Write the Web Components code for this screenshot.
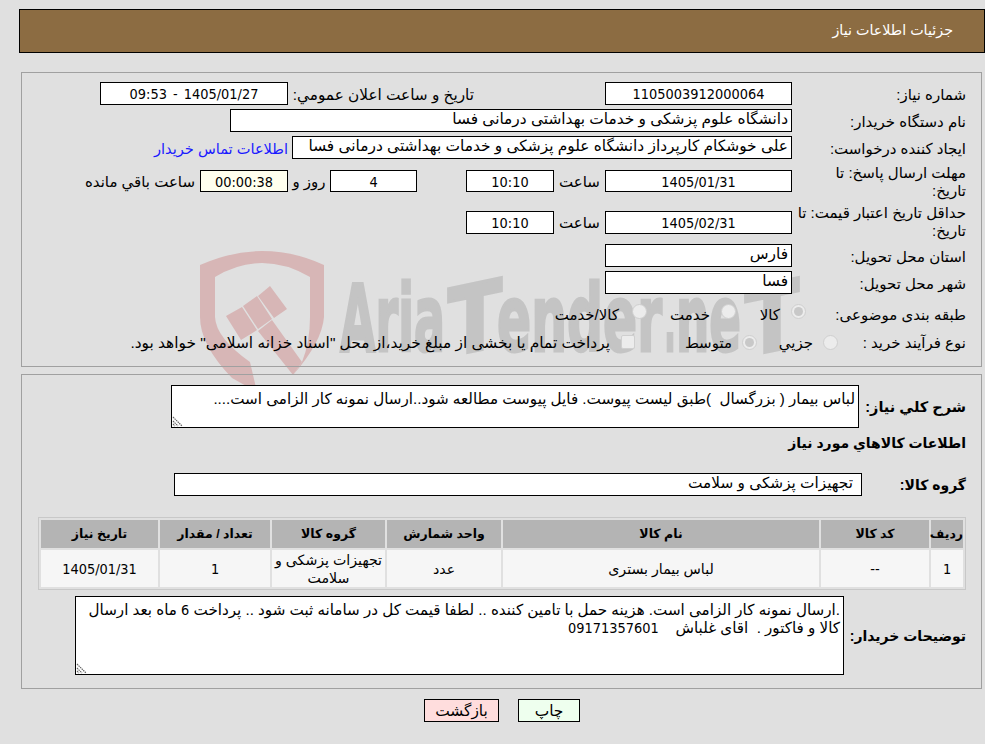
<!DOCTYPE html>
<html lang="fa" dir="rtl"><head><meta charset="utf-8">
<style>
html,body{margin:0;padding:0;background:#e0e0e0}
body{width:985px;height:744px;overflow:hidden;color:#000}
</style></head><body>
<tender-app></tender-app>
<script>
const FONT='font-family:"Liberation Sans","DejaVu Sans",sans-serif;font-size:15px;line-height:18px;';
const NUM='font-family:"DejaVu Sans Condensed","DejaVu Sans",sans-serif;font-size:14.4px;';
const def=(n,css,html)=>customElements.define(n,class extends HTMLElement{connectedCallback(){if(this.shadowRoot)return;this.attachShadow({mode:'open'}).innerHTML='<style>'+css+'</style>'+html;}});
def('tender-title',':host{display:flex;align-items:center;box-sizing:border-box;height:44px;width:966px;background:#8c6c42;border:1px solid #000;color:#fff;padding:0 31px 2px 0;'+FONT+'font-size:14.3px}','<slot></slot>');
def('tender-panel',':host{display:block;box-sizing:border-box;border:1px solid #a0a0a0;width:961px;margin:0 3px 0 0;padding-right:15px}','<slot></slot>');
def('tender-row',':host{display:flex;align-items:center;margin-bottom:4px}','<slot></slot>');
def('tender-field',':host{display:block;flex:none;box-sizing:border-box;background:#fff;border:1px solid #000;height:23px;line-height:24px;white-space:nowrap;overflow:hidden;padding:0 3px;'+FONT+'font-size:15.4px}:host([c]){text-align:center}:host([y]){background:#ffffee}:host([n]){'+NUM+'line-height:23px}','<slot></slot>');
def('tender-label',':host{display:block;flex:none;'+FONT+'}:host([b]){font-weight:bold;font-size:14px;white-space:nowrap}:host(:not([b])){margin-top:2px}:host([c]){text-align:center}','<slot></slot>');
def('tender-area',':host{display:block;flex:none;position:relative;box-sizing:border-box;background:#fff;border:1px solid #000;padding:4px 3px 3px;white-space:pre;overflow:hidden;'+FONT+'font-size:15.15px}svg{position:absolute;left:0;bottom:0}','<slot></slot><svg width="11" height="11" viewBox="0 0 11 11"><path d="M1 1l9 9M1 5l5 5M1 8l2 2" stroke="#666" stroke-width="1.2" stroke-dasharray="1.5 .7" fill="none"/></svg>');
def('tender-radio',':host{display:block;flex:none;width:15px;height:15px;box-sizing:border-box;border:1px solid #cfcfcf;border-radius:50%;background:#ececec;position:relative}:host([on])::after{content:"";position:absolute;inset:2px;border-radius:50%;background:#c8c8c8}','');
def('tender-check',':host{display:block;flex:none;width:14px;height:14px;box-sizing:border-box;border:1px solid #cfcfcf;border-radius:2px;background:#ececec}','');
def('tender-btn',':host{display:flex;align-items:center;justify-content:center;box-sizing:border-box;height:23px;border:1px solid #000;background:var(--b);'+FONT+'font-size:15.4px}','<slot></slot>');
def('tender-watermark',':host{display:block;position:absolute;left:0;top:0;width:985px;height:744px;pointer-events:none}',`<svg width="985" height="744" viewBox="0 0 985 744">
<g fill="#d7b6b6"><path d="M200 265Q232 251 262 251Q294 251 324 265V317Q322 342 293 375L302 362Q310 342 310 317V277Q286 263 262 263Q238 263 215 277V317Q216 338 250 362L257 392 232 378Q200 345 200 317Z"/>
<path d="M226 316l16-9 15 23-16 10zM243 306l14-10 15 23-14 10zM258 296l12-10 17 23-13 9zM258 331l14-11 30 42-9 13z"/></g>
<g font-family="DejaVu Sans" font-weight="bold" font-size="93" fill="#c4c4c4" stroke="#c4c4c4" stroke-width="3" direction="ltr">
<text x="340" y="351" textLength="105" lengthAdjust="spacingAndGlyphs">Aria</text>
<text x="448" y="351" textLength="54" lengthAdjust="spacingAndGlyphs" transform="translate(475 351) skewY(-12) translate(-475 -351)">T</text>
<text x="497" y="351" textLength="165" lengthAdjust="spacingAndGlyphs">ender</text>
<text x="664" y="351" textLength="12" lengthAdjust="spacingAndGlyphs">.</text>
<text x="676" y="351" textLength="65" lengthAdjust="spacingAndGlyphs">ne</text>
<text x="745" y="351" textLength="54" lengthAdjust="spacingAndGlyphs" transform="translate(772 351) skewY(-12) translate(-772 -351)">T</text>
</g></svg>`);
def('tender-table',`:host{display:block}
table{border-collapse:separate;border-spacing:2px;border:1px solid #c8c8c8;table-layout:fixed;width:928px;${FONT}}
th{background:#b4b4b4;height:28px;padding:0;font-weight:bold;font-size:12.5px}
td{background:#f6f6f6;height:37px;padding:0;text-align:center;font-size:14.2px}
td.n{${NUM}}`,
`<table><colgroup><col style="width:32px"><col style="width:108px"><col style="width:316px"><col style="width:114px"><col style="width:113px"><col style="width:110px"><col style="width:117px"></colgroup>
<tr><th>ردیف</th><th>کد کالا</th><th>نام کالا</th><th>واحد شمارش</th><th>گروه کالا</th><th>تعداد / مقدار</th><th>تاریخ نیاز</th></tr>
<tr><td class="n">1</td><td>--</td><td>لباس بیمار بستری</td><td>عدد</td><td>تجهیزات پزشکی و سلامت</td><td class="n">1</td><td class="n">1405/01/31</td></tr></table>`);
def('tender-app',`:host{display:block;position:relative;width:985px;height:744px;padding-top:9px;box-sizing:border-box;margin:0}
.main{position:relative}
.wrap{height:293px;padding-top:9px;box-sizing:border-box}
.wrap2{height:313px;padding-top:10px;box-sizing:border-box}
.l{width:174px}
.f{width:187px}
.sp{flex:none}
.n{${NUM}}
.radios{height:28px;margin:0}
.btns{display:flex;justify-content:center;gap:19px;margin-top:10px;padding-left:19px}`,
`<tender-watermark></tender-watermark><div class="main">
<tender-title>جزئیات اطلاعات نیاز</tender-title>
<tender-panel style="margin-top:19px"><div class="wrap">
<tender-row><tender-label class="l">شماره نیاز:</tender-label><tender-field class="f" c n>1105003912000064</tender-field><tender-label style="margin-right:131px;width:186px;font-size:15.3px">تاریخ و ساعت اعلان عمومي:</tender-label><tender-field c n style="width:188px;word-spacing:2px">1405/01/27 - 09:53</tender-field></tender-row>
<tender-row><tender-label class="l">نام دستگاه خریدار:</tender-label><tender-field style="width:562px">دانشگاه علوم پزشکی و خدمات بهداشتی درمانی فسا</tender-field></tender-row>
<tender-row><tender-label class="l">ایجاد کننده درخواست:</tender-label><tender-field style="width:500px">علی خوشکام کارپرداز دانشگاه علوم پزشکی و خدمات بهداشتی درمانی فسا</tender-field><tender-label style="color:#1a1aff;margin-right:4px;font-size:14.6px">اطلاعات تماس خریدار</tender-label></tender-row>
<tender-row style="margin:4px 0 5px"><tender-label class="l" style="margin:1px 0 -1px">مهلت ارسال پاسخ: تا<br>تاریخ:</tender-label><tender-field class="f" c n style="height:22px">1405/01/31</tender-field><tender-label c style="width:51px">ساعت</tender-label><tender-field c n style="width:88px;height:22px">10:10</tender-field><div class="sp" style="width:49px"></div><tender-field c n style="width:87px;height:22px">4</tender-field><tender-label c style="width:42px">روز و</tender-label><tender-field c y n style="width:88px;height:22px">00:00:38</tender-field><tender-label style="margin-right:5px">ساعت باقي مانده</tender-label></tender-row>
<tender-row><tender-label class="l" style="margin:0">حداقل تاریخ اعتبار قیمت: تا<br>تاریخ:</tender-label><tender-field class="f" c n>1405/02/31</tender-field><tender-label c style="width:51px">ساعت</tender-label><tender-field c n style="width:88px">10:10</tender-field></tender-row>
<tender-row><tender-label class="l">استان محل تحویل:</tender-label><tender-field class="f">فارس</tender-field></tender-row>
<tender-row style="margin-bottom:6px"><tender-label class="l">شهر محل تحویل:</tender-label><tender-field class="f">فسا</tender-field></tender-row>
<tender-row class="radios"><tender-label class="l" style="width:160px">طبقه بندی موضوعی:</tender-label><tender-radio on style="margin-top:-6px"></tender-radio><tender-label style="margin-right:11px;width:44px">کالا</tender-label><tender-radio style="margin-top:-6px"></tender-radio><tender-label style="margin-right:11px;width:63px">خدمت</tender-label><tender-radio style="margin-top:-6px"></tender-radio><tender-label style="margin-right:13px">کالا/خدمت</tender-label></tender-row>
<tender-row class="radios"><tender-label class="l" style="width:128px">نوع فرآیند خرید :</tender-label><tender-radio></tender-radio><tender-label style="margin-right:10px;width:56px">جزیي</tender-label><tender-radio on></tender-radio><tender-label style="margin-right:10px;width:97px">متوسط</tender-label><tender-check></tender-check><tender-label style="margin-right:11px;font-size:15.4px">پرداخت تمام یا بخشی از مبلغ خرید،از محل "اسناد خزانه اسلامی" خواهد بود.</tender-label></tender-row>
</div></tender-panel>
<tender-panel style="margin-top:7px"><div class="wrap2">
<tender-row style="margin:0"><tender-label b style="width:107px;font-size:14.5px">شرح کلي نیاز:</tender-label><tender-area style="width:688px;height:43px">لباس بیمار ( بزرگسال  )طبق لیست پیوست. فایل پیوست مطالعه شود..ارسال نمونه کار الزامی است....</tender-area></tender-row>
<tender-label b style="margin-top:6px;height:39px">اطلاعات کالاهاي مورد نیاز</tender-label>
<tender-row style="margin-bottom:21px"><tender-label b style="width:104px">گروه کالا:</tender-label><tender-field style="width:688px;padding-right:8px;font-size:15.3px">تجهیزات پزشکی و سلامت</tender-field></tender-row>
<tender-table></tender-table>
<tender-row style="margin:6px 0 0"><tender-label b style="width:122px">توضیحات خریدار:</tender-label><tender-area style="width:769px;height:79px">.ارسال نمونه کار الزامی است. هزینه حمل با تامین کننده .. لطفا قیمت کل در سامانه ثبت شود .. پرداخت <span class="n">6</span> ماه بعد ارسال<br>کالا و فاکتور .  اقای غلباش    <span class="n">09171357601</span></tender-area></tender-row>
</div></tender-panel>
<div class="btns"><tender-btn style="--b:#eeffee;width:62px">چاپ</tender-btn><tender-btn style="--b:#ffdddd;width:75px">بازگشت</tender-btn></div>
</div>`);
</script></body></html>
